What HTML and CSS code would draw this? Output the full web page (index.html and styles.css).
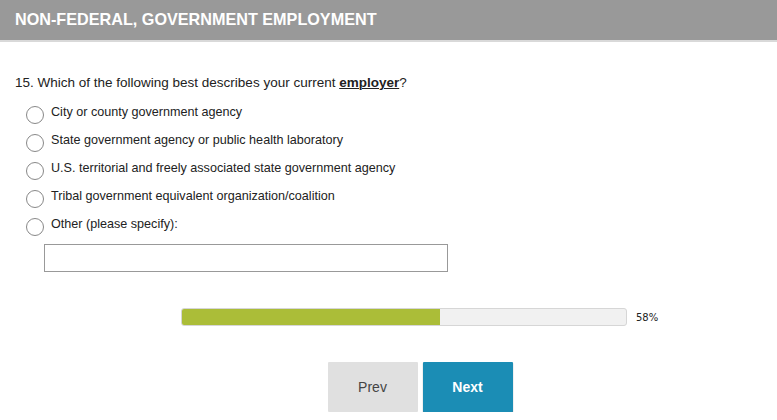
FILE: index.html
```html
<!DOCTYPE html>
<html lang="en">

<head>
    <meta charset="UTF-8">
    <meta name="viewport" content="width=device-width, initial-scale=1.0">
    <title>Survey - Non-Federal, Government Employment</title>
    <link rel="stylesheet" href="styles.css">
</head>

<body>
    <header class="page_header">
        <h1 class="page_title">NON-FEDERAL, GOVERNMENT EMPLOYMENT</h1>
    </header>
    <main class="survey">
        <div class="question">
            <div class="question_title">15. Which of the following best describes your current <b><u>employer</u></b>?</div>
            <div class="choices">
                <label class="choice"><span class="radio"></span><span>City or county government agency</span></label>
                <label class="choice"><span class="radio"></span><span>State government agency or public health laboratory</span></label>
                <label class="choice"><span class="radio"></span><span>U.S. territorial and freely associated state government agency</span></label>
                <label class="choice"><span class="radio"></span><span>Tribal government equivalent organization/coalition</span></label>
                <label class="choice"><span class="radio"></span><span>Other (please specify):</span></label>
            </div>
            <input type="text" class="other_text">
        </div>
        <div class="progress">
            <div class="progress_bar">
                <div class="progress_fill" style="width: 58%"></div>
            </div>
            <span class="progress_label">58%</span>
        </div>
        <div class="nav_buttons">
            <button class="btn btn_prev">Prev</button>
            <button class="btn btn_next">Next</button>
        </div>
    </main>
</body>

</html>
```

FILE: styles.css
```css
html, body {
    margin: 0;
    padding: 0;
    background-color: #fff;
    font-family: Arial, "Liberation Sans", sans-serif;
    color: #333;
}

.page_header {
    background-color: #999;
    height: 40px;
    border-bottom: 2px solid #d9d9d9;
    display: flex;
    align-items: center;
    padding: 0 15px;
}

.page_title {
    margin: 0;
    font-size: 16.2px;
    font-weight: bold;
    color: #fff;
    padding-bottom: 2px;
}

.survey {
    padding: 32px 0 0 15px;
}

.question_title {
    font-size: 13.5px;
    color: #222;
    line-height: 18px;
}

.question_title u {
    text-decoration-thickness: 1px;
}

.choices {
    display: flex;
    flex-direction: column;
    margin-top: 7px;
    padding-left: 11px;
}

.choice {
    display: flex;
    align-items: center;
    height: 28px;
    font-size: 12.6px;
    color: #222;
}

.choice .radio {
    box-sizing: border-box;
    width: 18px;
    height: 18px;
    border: 1px solid #888;
    border-radius: 50%;
    margin-right: 7px;
    margin-top: 3px;
    flex-shrink: 0;
}

.choice span:last-child {
    margin-top: -2px;
}

.other_text {
    display: block;
    box-sizing: border-box;
    width: 404px;
    height: 28px;
    margin: 5px 0 0 29px;
    border: 1px solid #999;
    outline: none;
}

.progress {
    display: flex;
    align-items: center;
    margin: 36px 0 0 166px;
}

.progress_bar {
    box-sizing: border-box;
    width: 446px;
    height: 18px;
    background-color: #f1f1f1;
    border: 1px solid #d6d6d6;
    border-radius: 3px;
    overflow: hidden;
}

.progress_fill {
    height: 100%;
    background-color: #abbd38;
}

.progress_label {
    margin-left: 9px;
    font-size: 10px;
    color: #222;
    font-family: "DejaVu Sans", sans-serif;
}

.nav_buttons {
    display: flex;
    justify-content: center;
    gap: 5px;
    margin-top: 36px;
    padding-left: 48px;
}

.btn {
    width: 90px;
    height: 50px;
    border: none;
    border-radius: 1px;
    font-family: Arial, "Liberation Sans", sans-serif;
    font-size: 14px;
    cursor: pointer;
}

.btn_prev {
    background-color: #e0e0e0;
    color: #444;
}

.btn_next {
    background-color: #1b8db5;
    color: #fff;
    font-weight: bold;
    box-shadow: 0 1px 1px #666;
}
```
